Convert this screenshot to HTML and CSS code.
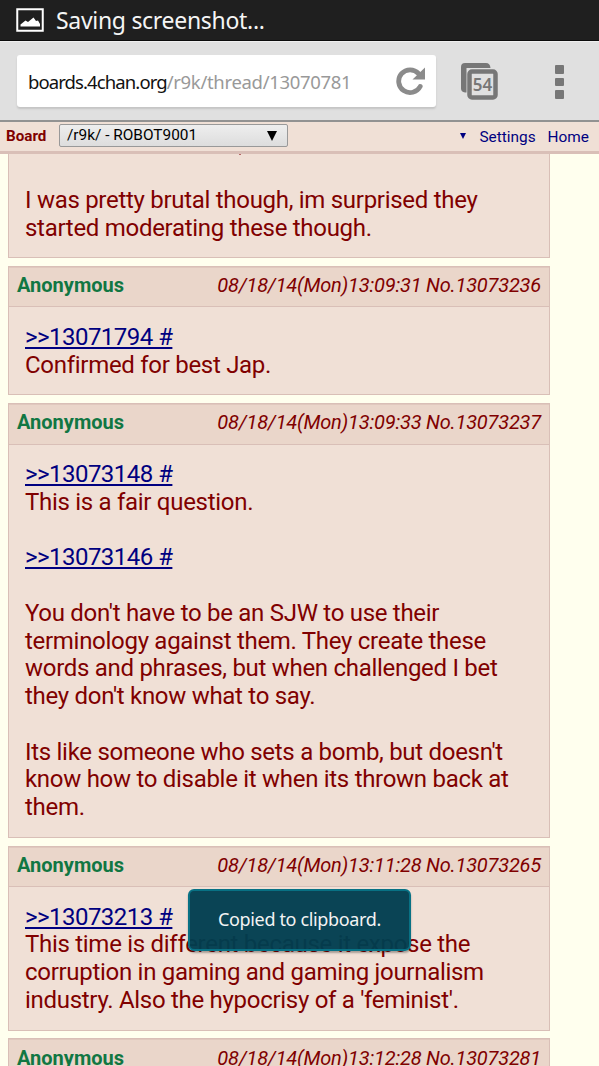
FILE: index.html
```html
<!DOCTYPE html>
<html lang="en">
<head>
  <meta charset="UTF-8" />
  <meta name="viewport" content="width=device-width, initial-scale=1.0"/>
  <title>/r9k/ - ROBOT9001</title>
  <link rel="stylesheet" href="styles.css">
</head>
<body>

  <div class="status-bar">
    <svg class="picture-icon" width="28" height="24" viewBox="0 0 28 24">
      <rect x="1.25" y="1.25" width="25.5" height="21.5" fill="none" stroke="#fff" stroke-width="2"/>
      <path d="M4.500 18.500V16.500L9.500 12.500L12 14L17.500 9.500L20 13L22 12.500L24 16V18.500z" fill="#fff"/>
    </svg>
    <span>Saving screenshot...</span>
  </div>

  <div class="toolbar">
    <div class="address">
      <div class="url"><b>boards.4chan.org</b><span>/r9k/thread/13070781</span></div>
      <svg width="30" height="30" viewBox="0 0 30 30">
        <path d="M24.200 20.500A11.400 11.400 0 1 1 22.600 7.600" fill="none" stroke="#8b8b8b" stroke-width="4.800" stroke-linecap="round"/>
        <path d="M29 1.500V13.500H16.500z" fill="#8b8b8b"/>
      </svg>
    </div>
    <div class="tabs">
      <svg width="38" height="38" viewBox="0 0 38 38">
        <path d="M5 30.500Q1 30 1 26.500V5Q1 1 5 1H26Q30 1 30.500 6H6.500V30.500z" fill="#777"/>
        <rect x="9.500" y="9.500" width="26" height="26" rx="2.500" fill="#e0e0e0" stroke="#777" stroke-width="4.500"/>
      </svg>
      <span>54</span>
    </div>
    <div class="more"><i></i><i></i><i></i></div>
  </div>

  <div class="board-nav">
    <b>Board</b>
    <div class="board-select"><span>/r9k/ - ROBOT9001</span><i></i></div>
    <i class="arrow"></i>
    <a>Settings</a>
    <a>Home</a>
  </div>

  <div class="thread">
    <div class="post first">
      <div class="message"><i class="tail"></i>I was pretty brutal though, im surprised they<br>started moderating these though.</div>
    </div>

    <div class="post">
      <div class="post-info"><b>Anonymous</b><em>08/18/14(Mon)13:09:31 No.13073236</em></div>
      <div class="message"><a>&gt;&gt;13071794 #</a><br>Confirmed for best Jap.</div>
    </div>

    <div class="post">
      <div class="post-info"><b>Anonymous</b><em>08/18/14(Mon)13:09:33 No.13073237</em></div>
      <div class="message"><a>&gt;&gt;13073148 #</a><br>This is a fair question.<br><br><a>&gt;&gt;13073146 #</a><br><br>You don't have to be an SJW to use their<br>terminology against them. They create these<br>words and phrases, but when challenged I bet<br>they don't know what to say.<br><br>Its like someone who sets a bomb, but doesn't<br>know how to disable it when its thrown back at<br>them.</div>
    </div>

    <div class="post">
      <div class="post-info"><b>Anonymous</b><em>08/18/14(Mon)13:11:28 No.13073265</em></div>
      <div class="message"><a>&gt;&gt;13073213 #</a><br>This time is different because it expose the<br>corruption in gaming and gaming journalism<br>industry. Also the hypocrisy of a 'feminist'.</div>
    </div>

    <div class="post">
      <div class="post-info"><b>Anonymous</b><em>08/18/14(Mon)13:12:28 No.13073281</em></div>
    </div>
  </div>

  <div class="toast">Copied to clipboard.</div>

</body>
</html>
```
FILE: styles.css
```css
* {
  box-sizing: border-box;
}

body {
  margin: 0;
  height: 1066px;
  overflow: hidden;
  background: #ffffee;
  font-family: Roboto, sans-serif;
  color: #800000;
}

.status-bar {
  height: 41px;
  padding-left: 16px;
  display: flex;
  align-items: center;
  background: #1f1f1f;
  border-bottom: 1px solid #0c0c0c;
  color: #f5f5f5;
  font-family: "Noto Sans", sans-serif;
  font-size: 23px;
  letter-spacing: -0.3px;
}

.picture-icon {
  margin-right: 12px;
}

.toolbar {
  height: 81px;
  padding: 0 16px 0 17px;
  display: flex;
  align-items: center;
  background: #e0e0e0;
  border-top: 1px solid #efefef;
  border-bottom: 2px solid #929292;
}

.address {
  width: 419px;
  height: 52px;
  padding: 0 10px 0 11px;
  display: flex;
  align-items: center;
  justify-content: space-between;
  background: #fff;
  border-radius: 3px;
  box-shadow: 0 2px 2px #c4c4c4;
}

.url {
  font-family: "Noto Sans", sans-serif;
  font-size: 18.5px;
  letter-spacing: -0.32px;
  color: #999;
  white-space: nowrap;
}

.url b {
  font-weight: normal;
  letter-spacing: -0.9px;
  color: #111;
}

.tabs {
  position: relative;
  width: 38px;
  height: 38px;
  margin-left: 24px;
}

.tabs span {
  position: absolute;
  left: 9px;
  top: 9px;
  width: 27px;
  text-align: center;
  font: 600 17px/27px "Noto Sans", sans-serif;
  color: #777;
}

.more {
  margin: 2px 0 0 57px;
  display: grid;
  gap: 4px;
}

.more i {
  width: 9px;
  height: 8.5px;
  background: #777;
  border-radius: 1px;
}

.board-nav {
  height: 32px;
  padding: 0 10px 2px 6px;
  display: flex;
  align-items: center;
  background: #f0e0d6;
  border-bottom: 3px solid #d9bfb7;
  font-size: 15.4px;
}

.board-nav b {
  width: 53px;
  font-size: 15.2px;
}

.board-select {
  width: 229px;
  height: 23px;
  padding: 0 10px 2px 7px;
  display: flex;
  align-items: center;
  justify-content: space-between;
  background: linear-gradient(#eee, #ddd);
  border: 1px solid #999;
  border-radius: 2px;
  color: #000;
}

.board-select i {
  margin-top: 2px;
  border: 5px solid transparent;
  border-top: 10px solid #000;
  border-bottom: 0;
}

.board-nav a {
  margin: 2px 0 0 12px;
  color: #000080;
}

.arrow {
  margin-left: auto;
  border: 3px solid transparent;
  border-top: 6px solid #000080;
  border-bottom: 0;
}

.board-nav .arrow + a {
  margin-left: 13px;
}

.thread {
  width: 542px;
  margin-left: 8px;
}

.post {
  margin-bottom: 7.7px;
  background: #f0e0d6;
  border: 1px solid #d9bfb7;
}

.first {
  height: 104.3px;
  border-top: 0;
}

.first .message {
  padding-top: 33px;
}

/* descender of the line scrolled under the nav */
.tail {
  position: absolute;
  left: 239px;
  top: 154px;
  width: 2px;
  height: 1px;
  background: #b36666;
}

.post-info {
  height: 40.5px;
  padding: 0 8px 4px;
  display: flex;
  align-items: center;
  justify-content: space-between;
  background: #ead6ca;
  border-top: 1px solid #e0c8be;
  border-bottom: 1.5px solid #d9bfb7;
  font-size: 20px;
}

.post-info b {
  color: #117743;
}

.post-info em {
  letter-spacing: -0.21px;
}

.message {
  padding: 16.5px 16px 15px;
  font-size: 24px;
  line-height: 27.75px;
  letter-spacing: -0.29px;
  white-space: nowrap;
}

.message a {
  color: #000080;
  text-decoration: underline;
}

.message > a {
  letter-spacing: -0.53px;
}

.toast {
  position: absolute;
  left: 188px;
  top: 889px;
  width: 223px;
  height: 62px;
  background: rgba(0, 61, 79, 0.96);
  border: 2px solid #087184;
  border-radius: 6px;
  box-shadow: 0 2px 2px rgba(0, 0, 0, 0.3);
  color: #f3f3f3;
  font: 18px/56px "Noto Sans", sans-serif;
  letter-spacing: -0.35px;
  text-align: center;
}
```
